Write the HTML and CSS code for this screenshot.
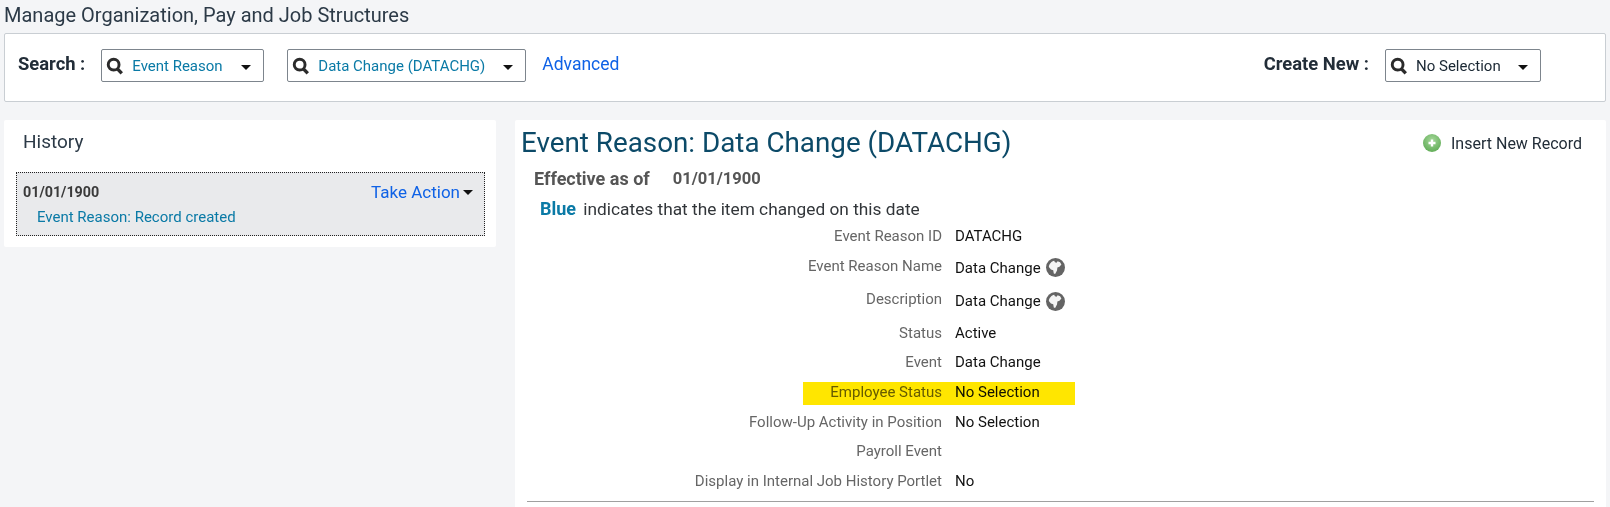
FILE: index.html
```html
<!DOCTYPE html>
<html lang="en">
<head>
    <meta charset="UTF-8">
    <title>Manage Organization, Pay and Job Structures</title>
    <link rel="stylesheet" href="styles.css">
</head>
<body>
    <svg class="icon-defs" width="0" height="0">
        <symbol id="icon-search" viewBox="0 0 16 16">
            <circle cx="6.8" cy="6.8" r="4.8" fill="none" stroke="#2b2b2b" stroke-width="2.6"/>
            <path d="M10 10.4l4 4.2" stroke="#2b2b2b" stroke-width="3" fill="none"/>
        </symbol>
        <symbol id="icon-globe" viewBox="0 0 20 20">
            <circle cx="10" cy="10" r="10" fill="#646464"/>
            <path d="M3 9.5C3.2 6.4 6 3.4 8.6 3l.8 1.6 1.8.4 1-1.6 2.6 1.2 1.4 2.2-2 2.4-2.2.8-.4 3.2-2 3.6-1.4-.4-.6-3.6-2.4-.8z" fill="#f4f4f4"/>
        </symbol>
    </svg>

    <h1 class="page-title">Manage Organization, Pay and Job Structures</h1>

    <div class="search-panel">
        <span class="search-label">Search :</span>
        <div class="select select-reason">
            <svg class="select-icon"><use href="#icon-search"/></svg>
            <span class="select-text">Event Reason</span>
            <span class="caret"></span>
        </div>
        <div class="select select-item">
            <svg class="select-icon"><use href="#icon-search"/></svg>
            <span class="select-text">Data Change (DATACHG)</span>
            <span class="caret"></span>
        </div>
        <a class="advanced-link" href="#">Advanced</a>
        <span class="search-label create-label">Create New :</span>
        <div class="select select-create">
            <svg class="select-icon"><use href="#icon-search"/></svg>
            <span class="select-text dark">No Selection</span>
            <span class="caret"></span>
        </div>
    </div>

    <div class="content">
        <div class="history-panel">
            <h2 class="history-title">History</h2>
            <div class="history-item">
                <div class="history-top">
                    <span class="history-date">01/01/1900</span>
                    <a class="take-action" href="#">Take Action<span class="caret"></span></a>
                </div>
                <div class="history-note">Event Reason: Record created</div>
            </div>
        </div>

        <div class="detail-panel">
            <div class="detail-head">
                <h2 class="detail-title">Event Reason: Data Change (DATACHG)</h2>
                <a class="insert-link" href="#">
                    <svg class="plus-icon" viewBox="0 0 18 18">
                        <defs>
                            <radialGradient id="plus-fill" cx="50%" cy="35%" r="65%">
                                <stop offset="0" stop-color="#a5d79a"/>
                                <stop offset="1" stop-color="#62ad58"/>
                            </radialGradient>
                        </defs>
                        <circle cx="9" cy="9" r="9" fill="url(#plus-fill)"/>
                        <path d="M9 5.5v7M5.5 9h7" stroke="#fff" stroke-width="2.4"/>
                    </svg>
                    Insert New Record
                </a>
            </div>
            <div class="effective"><span>Effective as of</span><span class="effective-date">01/01/1900</span></div>
            <div class="legend"><b>Blue</b> indicates that the item changed on this date</div>

            <div class="fields">
                <div class="field field-id"><div class="field-label">Event Reason ID</div><div class="field-value">DATACHG</div></div>
                <div class="field field-tall"><div class="field-label">Event Reason Name</div><div class="field-value">Data Change <svg class="globe"><use href="#icon-globe"/></svg></div></div>
                <div class="field field-tall"><div class="field-label">Description</div><div class="field-value">Data Change <svg class="globe"><use href="#icon-globe"/></svg></div></div>
                <div class="field"><div class="field-label">Status</div><div class="field-value">Active</div></div>
                <div class="field"><div class="field-label">Event</div><div class="field-value">Data Change</div></div>
                <div class="field"><div class="field-label">Employee Status</div><div class="field-value">No Selection</div><span class="marker"></span></div>
                <div class="field"><div class="field-label">Follow-Up Activity in Position</div><div class="field-value">No Selection</div></div>
                <div class="field"><div class="field-label">Payroll Event</div><div class="field-value"></div></div>
                <div class="field"><div class="field-label">Display in Internal Job History Portlet</div><div class="field-value">No</div></div>
            </div>
            <hr class="detail-rule">
        </div>
    </div>
</body>
</html>
```

FILE: styles.css
```css
html, body {
    margin: 0;
    padding: 0;
    height: 507px;
    overflow: hidden;
}
body {
    font-family: Roboto, "Liberation Sans", sans-serif;
    background-color: #f4f5f7;
    color: #32363a;
    padding: 0 4px;
}
a {
    text-decoration: none;
}
.icon-defs {
    position: absolute;
}
.page-title {
    margin: 0;
    height: 33px;
    line-height: 31px;
    font-size: 20px;
    font-weight: 400;
    color: #2c3a47;
}

/* search bar */
.search-panel {
    display: flex;
    align-items: flex-start;
    height: 69px;
    box-sizing: border-box;
    padding: 15px 0 0 13px;
    background-color: #fff;
    border: 1px solid #c9ced3;
    border-radius: 2px;
}
.search-label {
    font-size: 18.4px;
    font-weight: 700;
    line-height: 30px;
    color: #222d38;
    margin-right: 16px;
}
.create-label {
    margin-left: auto;
}
.select {
    display: flex;
    align-items: center;
    height: 33px;
    box-sizing: border-box;
    background-color: #fff;
    border: 1px solid #7d858d;
    border-radius: 2px;
    padding-left: 4px;
}
.select-reason {
    width: 163px;
    margin-right: 23px;
}
.select-item {
    width: 239px;
    margin-right: 16px;
}
.select-create {
    width: 156px;
    margin-right: 64px;
}
.select-icon {
    width: 18px;
    height: 18px;
    margin-right: 8px;
    flex: none;
}
.select-text {
    font-size: 15px;
    color: #0a7aa6;
    flex: 1;
}
.select-text.dark {
    color: #1a2733;
}
.caret {
    display: inline-block;
    width: 0;
    height: 0;
    border-left: 5px solid transparent;
    border-right: 5px solid transparent;
    border-top: 5px solid #111;
}
.select .caret {
    margin-right: 12px;
    margin-top: 3px;
}
.advanced-link {
    font-size: 17.5px;
    line-height: 30px;
    color: #0f62e6;
}

.content {
    display: flex;
    gap: 19px;
    margin-top: 18px;
}

/* history */
.history-panel {
    width: 492px;
    height: 127px;
    flex: none;
    box-sizing: border-box;
    padding: 0 11px 0 12px;
    background-color: #fff;
    border-radius: 2px;
}
.history-title {
    margin: 0 0 0 7px;
    height: 52px;
    line-height: 44px;
    font-size: 19px;
    font-weight: 400;
    color: #2c3a47;
}
.history-item {
    height: 64px;
    box-sizing: border-box;
    padding: 6px 11px 0 6px;
    background-color: #e9eaec;
    border: 1px dotted #222;
}
.history-top {
    display: flex;
    justify-content: space-between;
    align-items: center;
    height: 26px;
}
.history-date {
    font-size: 14.3px;
    font-weight: 700;
    color: #3a3a3a;
}
.take-action {
    font-size: 17px;
    color: #0f62e6;
}
.take-action .caret {
    margin-left: 3px;
    vertical-align: 3px;
}
.history-note {
    margin: 3px 0 0 14px;
    font-size: 15px;
    color: #0a7aa6;
}

/* record details */
.detail-panel {
    flex: 1;
    height: 390px;
    background-color: #fff;
    padding: 0 24px 0 6px;
    border-radius: 2px;
}
.detail-head {
    display: flex;
    justify-content: space-between;
    align-items: center;
    height: 46px;
}
.detail-title {
    margin: -2px 0 0;
    font-size: 27.8px;
    font-weight: 400;
    color: #0c4a68;
}
.insert-link {
    display: flex;
    align-items: center;
    gap: 10px;
    font-size: 16px;
    color: #222d38;
}
.plus-icon {
    width: 18px;
    height: 18px;
}
.effective {
    display: flex;
    align-items: center;
    gap: 23px;
    margin-left: 13px;
    font-size: 18px;
    font-weight: 700;
    line-height: 26px;
    color: #555;
}
.effective-date {
    font-size: 16.5px;
}
.legend {
    margin: 5px 0 0 19px;
    font-size: 17.3px;
    line-height: 24px;
    color: #32363a;
}
.legend b {
    margin-right: 3px;
    font-size: 18px;
    color: #0a7aa6;
}
.field {
    position: relative;
    display: flex;
    align-items: center;
    height: 29.6px;
    font-size: 15px;
}
.field-id {
    height: 30px;
}
.field-tall {
    height: 33.5px;
}
.field-label {
    width: 421px;
    flex: none;
    text-align: right;
    color: #666;
}
.field-tall .field-label {
    margin-top: -4px;
}
.field-value {
    margin-left: 13px;
    display: flex;
    align-items: center;
    gap: 2px;
    color: #111;
    white-space: pre-wrap;
}
.globe {
    width: 19px;
    height: 19px;
}
.marker {
    position: absolute;
    left: 282px;
    top: 5px;
    width: 272px;
    height: 23px;
    background-color: #ffe600;
    mix-blend-mode: multiply;
}
.detail-rule {
    margin: 5px -12px 0 6px;
    border: 0;
    border-top: 1px solid #a0a0a0;
}
```
